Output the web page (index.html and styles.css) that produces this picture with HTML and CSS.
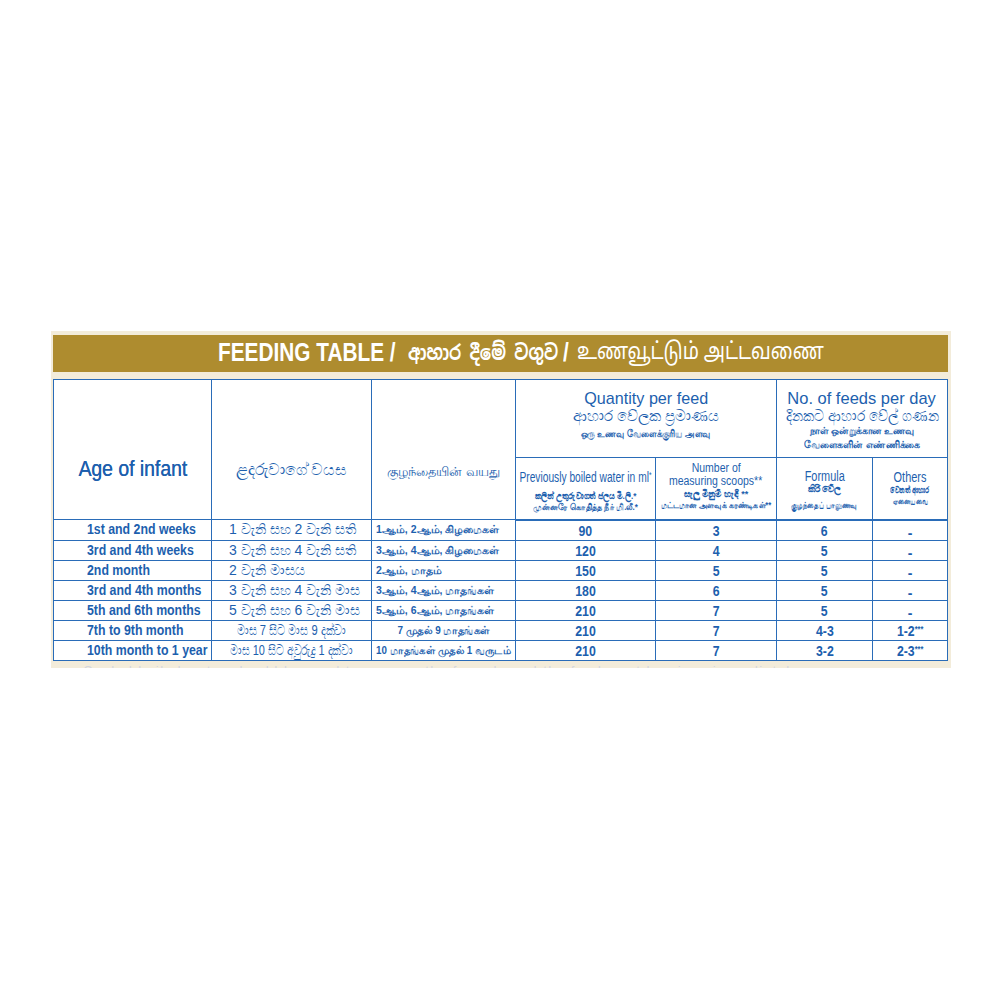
FILE: index.html
```html
<!DOCTYPE html>
<html>
<head>
<meta charset="utf-8">
<link rel="stylesheet" href="styles.css">
</head>
<body>
<div class="page">
  <div class="panel">
    <div class="band">
      <span class="tw w-en"><span class="ti t-en">FEEDING TABLE /</span></span>
      <span class="tw w-si"><span class="ti t-si">ආහාර දීමේ වගුව</span></span>
      <span class="tw w-sl"><span class="ti t-en">/</span></span>
      <span class="tw w-ta"><span class="ti t-ta">உணவூட்டும் அட்டவணை</span></span>
    </div>
    <table class="feed">
      <colgroup>
        <col class="c1"><col class="c2"><col class="c3"><col class="c4"><col class="c5"><col class="c6"><col class="c7">
      </colgroup>
      <tr class="h1">
        <th rowspan="2" class="side age"><div class="ln"><span class="sx s-age">Age of infant</span></div></th>
        <th rowspan="2" class="side si-h"><div class="ln"><span class="sx">ළදරුවාගේ වයස</span></div></th>
        <th rowspan="2" class="side ta-h"><div class="ln"><span class="sx">குழந்தையின் வயது</span></div></th>
        <th colspan="2" class="grp">
          <div class="ln g-en"><span class="sx s-q">Quantity per feed</span></div>
          <div class="ln g-si"><span class="sx s-qs">ආහාර වේලක ප්‍රමාණය</span></div>
          <div class="ln g-ta g-ta1"><span class="sx s-qt">ஒரு உணவு வேளைக்குரிய அளவு</span></div>
        </th>
        <th colspan="2" class="grp">
          <div class="ln g-en"><span class="sx s-nf">No. of feeds per day</span></div>
          <div class="ln g-si"><span class="sx s-ns">දිනකට ආහාර වේල් ගණන</span></div>
          <div class="ln g-ta"><span class="sx s-nt">நாள் ஒன்றுக்கான உணவு</span></div>
          <div class="ln g-ta"><span class="sx s-nt">வேளைகளின் எண்ணிக்கை</span></div>
        </th>
      </tr>
      <tr class="h2">
        <th class="sub sub-w">
          <div class="ln s-en"><span class="sx s-pb">Previously boiled water in ml<sup>*</sup></span></div>
          <div class="ln s-si"><span class="sx s-ws">කලින් උතුරුවාගත් ජලය මි.ලි.*</span></div>
          <div class="ln s-ta"><span class="sx s-wt">முன்னரே கொதித்த நீர் மி.லீ.*</span></div>
        </th>
        <th class="sub sub-n">
          <div class="ln s-en"><span class="sx s-ms">Number of</span></div>
          <div class="ln s-en"><span class="sx s-ms">measuring scoops**</span></div>
          <div class="ln s-si"><span class="sx">සැලු මිනුම් හැඳි **</span></div>
          <div class="ln s-ta"><span class="sx s-mt">மட்டமான அளவுக் கரண்டிகள்**</span></div>
        </th>
        <th class="sub sub-f">
          <div class="ln s-en"><span class="sx s-fo">Formula</span></div>
          <div class="ln s-si"><span class="sx">කිරි වේල</span></div>
          <div class="ln s-ta"><span class="sx s-ft">குழந்தைப் பாலுணவு</span></div>
        </th>
        <th class="sub sub-o">
          <div class="ln s-en"><span class="sx s-fo">Others</span></div>
          <div class="ln s-si"><span class="sx s-os">වෙනත් ආහාර</span></div>
          <div class="ln s-ta"><span class="sx s-ot">ஏனையவை</span></div>
        </th>
      </tr>
      <tr class="r">
        <td class="en"><span class="sx l">1st and 2nd weeks</span></td><td class="si">1 වැනි සහ 2 වැනි සති</td><td class="tc"><span class="sx l">1ஆம், 2ஆம், கிழமைகள்</span></td>
        <td class="n"><span class="sx">90</span></td><td class="n"><span class="sx">3</span></td><td class="n"><span class="sx">6</span></td><td class="n dash">-</td>
      </tr>
      <tr class="r">
        <td class="en"><span class="sx l">3rd and 4th weeks</span></td><td class="si">3 වැනි සහ 4 වැනි සති</td><td class="tc"><span class="sx l">3ஆம், 4ஆம், கிழமைகள்</span></td>
        <td class="n"><span class="sx">120</span></td><td class="n"><span class="sx">4</span></td><td class="n"><span class="sx">5</span></td><td class="n dash">-</td>
      </tr>
      <tr class="r">
        <td class="en"><span class="sx l">2nd month</span></td><td class="si">2 වැනි මාසය</td><td class="tc"><span class="sx l">2ஆம், மாதம்</span></td>
        <td class="n"><span class="sx">150</span></td><td class="n"><span class="sx">5</span></td><td class="n"><span class="sx">5</span></td><td class="n dash">-</td>
      </tr>
      <tr class="r">
        <td class="en"><span class="sx l">3rd and 4th months</span></td><td class="si">3 වැනි සහ 4 වැනි මාස</td><td class="tc"><span class="sx l">3ஆம், 4ஆம், மாதங்கள்</span></td>
        <td class="n"><span class="sx">180</span></td><td class="n"><span class="sx">6</span></td><td class="n"><span class="sx">5</span></td><td class="n dash">-</td>
      </tr>
      <tr class="r">
        <td class="en"><span class="sx l">5th and 6th months</span></td><td class="si">5 වැනි සහ 6 වැනි මාස</td><td class="tc"><span class="sx l">5ஆம், 6ஆம், மாதங்கள்</span></td>
        <td class="n"><span class="sx">210</span></td><td class="n"><span class="sx">7</span></td><td class="n"><span class="sx">5</span></td><td class="n dash">-</td>
      </tr>
      <tr class="r">
        <td class="en"><span class="sx l">7th to 9th month</span></td>
        <td class="si c"><div class="ln"><span class="sx s-r7">මාස 7 සිට මාස 9 දක්වා</span></div></td>
        <td class="tc c"><div class="ln"><span class="sx s-t7">7 முதல் 9 மாதங்கள்</span></div></td>
        <td class="n"><span class="sx">210</span></td><td class="n"><span class="sx">7</span></td><td class="n"><span class="sx">4-3</span></td><td class="n"><span class="sx">1-2<sup>***</sup></span></td>
      </tr>
      <tr class="r">
        <td class="en"><span class="sx l">10th month to 1 year</span></td>
        <td class="si c"><div class="ln"><span class="sx s-r8">මාස 10 සිට අවුරුදු 1 දක්වා</span></div></td>
        <td class="tc c"><div class="ln"><span class="sx s-t8">10 மாதங்கள் முதல் 1 வருடம்</span></div></td>
        <td class="n"><span class="sx">210</span></td><td class="n"><span class="sx">7</span></td><td class="n"><span class="sx">3-2</span></td><td class="n"><span class="sx">2-3<sup>***</sup></span></td>
      </tr>
    </table>
    <div class="cut"><span>Cooled boiled water should be used to prepare the formula and the feed must be given immediately</span></div>
  </div>
</div>
</body>
</html>
```
FILE: styles.css
```css
html, body {
  margin: 0;
  padding: 0;
  background: #ffffff;
}
.page {
  width: 1000px;
  height: 1000px;
  padding-top: 331px;
  padding-left: 51px;
  box-sizing: border-box;
}
.panel {
  width: 900px;
  background: #f3ecda;
  padding: 4px 3px 0 2px;
  box-sizing: border-box;
}

/* title band */
.band {
  height: 37px;
  background: #ae8c2f;
  color: #ffffff;
  display: flex;
  align-items: center;
  padding-left: 165px;
  overflow: hidden;
}
.tw {
  flex: none;
  display: block;
  white-space: nowrap;
  line-height: 37px;
}
.w-en { width: 190px; }
.w-si { width: 155px; }
.w-sl { width: 14px; }
.w-ta { width: 250px; }
.ti {
  display: inline-block;
  transform-origin: left center;
}
.t-en {
  font-family: "Liberation Sans", Arial, sans-serif;
  font-weight: bold;
  font-size: 26px;
  transform: scaleX(0.8);
}
.t-si {
  font-family: "Noto Sans Sinhala", sans-serif;
  font-weight: bold;
  font-size: 21px;
  transform: scaleX(0.8);
}
.t-ta {
  font-family: "Noto Sans Tamil", sans-serif;
  font-size: 23px;
  transform: scaleX(0.82);
}

/* table */
.feed {
  margin-top: 7px;
  width: 894px;
  border-collapse: collapse;
  background: #ffffff;
  table-layout: fixed;
  color: #1d5fae;
  font-family: "Liberation Sans", Arial, sans-serif;
}
.c1 { width: 158px; }
.c2 { width: 160px; }
.c3 { width: 144px; }
.c4 { width: 140px; }
.c5 { width: 121px; }
.c6 { width: 96px; }
.c7 { width: 75px; }
.feed th, .feed td {
  border: 1.5px solid #2a6cb8;
  padding: 0;
  font-weight: normal;
  text-align: center;
  vertical-align: top;
  white-space: nowrap;
}
.ln {
  display: flex;
  justify-content: center;
  white-space: nowrap;
}
.sx {
  display: inline-block;
  white-space: nowrap;
  transform-origin: center;
}
.sx.l { transform-origin: left center; }

.h1 { height: 78px; }
.h2 { height: 62px; }
.feed .side { overflow: hidden; }
.feed .age { padding-top: 77px; font-size: 22px; line-height: 24px; }
.s-age { transform: scaleX(0.88); text-shadow: 0.3px 0 0 #1d5fae; }
.feed .si-h { padding-top: 80px; font-size: 16px; line-height: 20px; }
.feed .ta-h { padding-top: 83px; font-size: 12.5px; line-height: 18px; }

.feed .grp { padding-top: 10px; }
.g-en { font-size: 17px; line-height: 18px; }
.s-q { transform: scaleX(0.95); }
.s-nf { transform: scaleX(0.97); }
.g-si { font-size: 15px; line-height: 16px; }
.s-ns { transform: scaleX(0.92); }
.g-ta { font-size: 10px; line-height: 14px; font-weight: bold; }
.g-ta1 { margin-top: 3px; }
.s-qt { transform: scaleX(0.85); }
.s-nt { transform: scaleX(0.95); }

.feed .sub { overflow: hidden; }
.feed .sub-w { padding-top: 12px; }
.feed .sub-n { padding-top: 4px; }
.feed .sub-f { padding-top: 12px; }
.feed .sub-o { padding-top: 13px; }
.s-en { font-size: 14px; line-height: 14px; }
.sub-n .s-en { font-size: 12.5px; line-height: 13px; }
.sub-f .s-en, .sub-o .s-en { line-height: 13px; }
.s-pb { transform: scaleX(0.73); }
.s-ms { transform: scaleX(0.84); }
.s-fo { transform: scaleX(0.78); }
.s-si { font-size: 9px; line-height: 12px; font-weight: bold; }
.sub-w .s-si { margin-top: 6px; }
.sub-n .s-si { margin-top: 1px; line-height: 11px; }
.s-ta { font-size: 9px; line-height: 11px; font-weight: bold; }
.sub-n .s-ta { line-height: 10px; }
.sub-f .s-ta { margin-top: 5px; }
.s-ws { transform: scaleX(0.9); }
.s-wt { transform: scaleX(0.88); }
.s-mt { transform: scaleX(0.85); }
.s-ft { transform: scaleX(0.76); }
.s-os { transform: scaleX(0.75); }
.s-ot { transform: scaleX(0.7); }
.feed sup { font-size: 9px; line-height: 0; vertical-align: 4px; }
.h2 th { border-bottom-width: 2.5px; }

/* body rows */
.r { height: 20px; }
.r td { line-height: 17px; vertical-align: middle; overflow: hidden; }
.feed .en {
  text-align: left;
  padding-left: 33px;
  font-size: 14px;
  font-weight: bold;
}
.en .sx { transform: scaleX(0.88); }
.feed .si {
  text-align: left;
  padding-left: 17px;
  font-size: 14px;
}
.feed .tc {
  text-align: left;
  padding-left: 4px;
  font-size: 10.5px;
  font-weight: bold;
}
.tc .sx.l { transform: scaleX(1); }
.feed .c { padding-left: 0; }
.s-r7 { transform: scaleX(0.8); }
.s-r8 { transform: scaleX(0.78); }
.s-t7 { transform: scaleX(0.95); }
.s-t8 { transform: scaleX(0.93); }
.feed .n {
  font-weight: bold;
  font-size: 15px;
}
.n .sx { transform: scaleX(0.82); }
.r .dash {
  font-size: 14px;
  vertical-align: top;
  line-height: 14px;
  padding-top: 5px;
  overflow: visible;
}

/* clipped footnote */
.cut {
  height: 7px;
  overflow: hidden;
  position: relative;
}
.cut span {
  position: absolute;
  left: 30px;
  top: 3px;
  font-family: "Liberation Sans", sans-serif;
  font-size: 13px;
  line-height: 13px;
  color: #d3d6de;
  white-space: nowrap;
  letter-spacing: 1.5px;
}
```
